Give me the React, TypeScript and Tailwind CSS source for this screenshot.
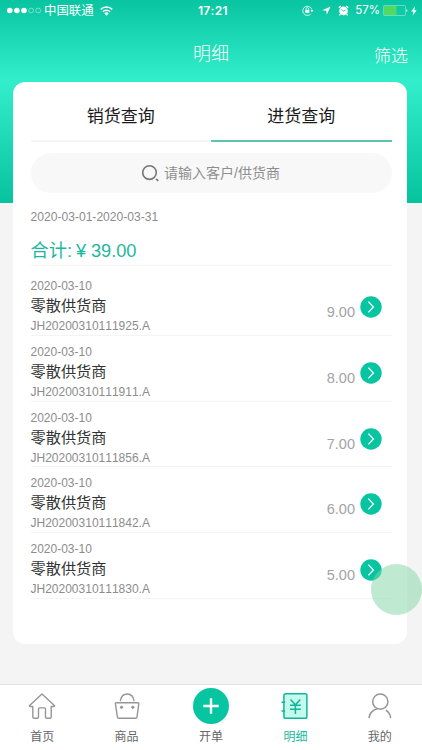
import React from 'react';

const summary = { range: '2020-03-01-2020-03-31', total: '39.00' };

const records = [
  { id: 1, date: '2020-03-10', name: '零散供货商', code: 'JH20200310111925.A', amount: 9 },
  { id: 2, date: '2020-03-10', name: '零散供货商', code: 'JH20200310111911.A', amount: 8 },
  { id: 3, date: '2020-03-10', name: '零散供货商', code: 'JH20200310111856.A', amount: 7 },
  { id: 4, date: '2020-03-10', name: '零散供货商', code: 'JH20200310111842.A', amount: 6 },
  { id: 5, date: '2020-03-10', name: '零散供货商', code: 'JH20200310111830.A', amount: 5 },
];

const StatusBar = () => (
  <div className="flex h-[21px] items-center pl-[7px] pr-[5px] text-white">
    <div className="flex w-[191px] items-center">
      <svg width="35" height="7" viewBox="0 0 35 7" fill="white">
        <circle cx="2.8" cy="3.5" r="2.8" />
        <circle cx="9.9" cy="3.5" r="2.8" />
        <circle cx="17" cy="3.5" r="2.8" />
        <circle cx="24.1" cy="3.5" r="2.4" fill="none" stroke="white" strokeOpacity="0.7" strokeWidth="0.6" />
        <circle cx="31.2" cy="3.5" r="2.4" fill="none" stroke="white" strokeOpacity="0.7" strokeWidth="0.6" />
      </svg>
      <span className="ml-[2px] pt-[2px] text-[12.4px] leading-none">中国联通</span>
      <svg className="ml-[6px]" width="13" height="10" viewBox="0 0 13 10" fill="none" stroke="white" strokeWidth="1.5">
        <path d="M0.7 3.4a8.3 8.3 0 0 1 11.6 0" />
        <path d="M2.8 5.8a5.3 5.3 0 0 1 7.4 0" />
        <path d="M4.3 7.4a3.2 3.2 0 0 1 4.4 0L6.5 9.7z" fill="white" stroke="none" />
      </svg>
    </div>
    <span className="pt-px font-[Inter,sans-serif] text-[12px] font-semibold leading-none tracking-[0.3px]">17:21</span>
    <div className="ml-auto flex items-center">
      <svg width="12" height="11" viewBox="0 0 12 11" fill="none" stroke="white" strokeWidth="0.8">
        <path d="M8.6 9.1A4.6 4.6 0 1 1 9.8 4.5" />
        <path d="M8.4 5h3L9.9 7.2z" fill="white" stroke="none" />
        <rect x="3.3" y="4.9" width="4" height="3" fill="white" stroke="none" />
        <path d="M4 5V3.9a1.3 1.3 0 0 1 2.6 0V5" />
      </svg>
      <svg className="ml-[8px]" width="9" height="9" viewBox="0 0 9 9" fill="white">
        <path d="M8.6 0.4L0.3 4.3l4 0.4 0.4 4z" />
      </svg>
      <svg className="ml-[7px]" width="11" height="11" viewBox="0 0 11 11">
        <circle cx="5.5" cy="5.9" r="4.3" fill="white" />
        <path d="M0.8 2.8L2.8 1M10.2 2.8L8.2 1M2.4 9.2l-1 1.2M8.6 9.2l1 1.2" stroke="white" strokeWidth="1.3" />
        <path d="M3.5 4.4l2 1.7 2-1.1" fill="none" stroke="#12cda9" strokeWidth="0.9" />
      </svg>
      <span className="ml-[6px] pt-px font-[Inter,sans-serif] text-[11.5px] leading-none">57%</span>
      <svg className="ml-[3px]" width="25" height="11" viewBox="0 0 25 11">
        <rect x="0.4" y="0.5" width="22" height="10" rx="1" fill="none" stroke="white" strokeOpacity="0.6" strokeWidth="0.6" />
        <rect x="1" y="1" width="12.5" height="9" fill="#52d962" />
        <path d="M23.4 4v3c1.2-0.4 1.2-2.6 0-3z" fill="white" />
      </svg>
      <svg className="ml-[3px]" width="6" height="10" viewBox="0 0 6 10" fill="white">
        <path d="M4.1 0.2L0.2 5.5h2.2L1.6 9.8l4-5.6H3.3z" />
      </svg>
    </div>
  </div>
);

const ArrowBadge = () => (
  <svg width="22" height="22" viewBox="0 0 22 22">
    <circle cx="11" cy="11" r="10.7" fill="#08c5a1" />
    <path d="M8.4 5.6L13.4 11l-5 5.4" fill="none" stroke="white" strokeWidth="1.3" />
  </svg>
);

const HomeIcon = () => (
  <svg width="28" height="28" viewBox="0 0 28 28" fill="none" stroke="#969696" strokeWidth="1.4" strokeLinejoin="round">
    <path d="M14 1.9L1.6 13.5c-.4.5-.2 1 .4 1h2.8v10.6c0 .7.4 1.1 1.1 1.1h3.6c.7 0 1-.4 1-1.1v-8c0-.8.4-1.2 1.1-1.2h4.8c.7 0 1.1.4 1.1 1.2v8c0 .7.3 1.1 1 1.1h3.6c.7 0 1.1-.4 1.1-1.1V14.5H26c.6 0 .8-.5.4-1z" />
  </svg>
);

const BagIcon = () => (
  <svg width="28" height="28" viewBox="0 0 28 28" fill="none" stroke="#969696" strokeWidth="1.4" strokeLinejoin="round" strokeLinecap="round">
    <path d="M3.1 10.8h21.8c.7 0 1 .4.9 1L24 25c-.1.8-.6 1.3-1.3 1.3H5.8c-.8 0-1.3-.5-1.4-1.3L2.4 11.8c-.1-.6.1-1 .7-1z" />
    <path d="M7.4 8.6c.7-4.1 3.3-6.6 6.8-6.6s6.1 2.5 6.8 6.6" />
    <circle cx="8.5" cy="15.3" r="1.2" fill="#969696" strokeWidth="0.8" />
    <circle cx="19.8" cy="15.3" r="1.2" fill="#969696" strokeWidth="0.8" />
  </svg>
);

const LedgerIcon = () => (
  <svg width="28" height="28" viewBox="0 0 28 28" fill="none" stroke="#12b697" strokeWidth="1.5">
    <rect x="2.9" y="1.8" width="23" height="24.5" rx="1.8" fill="#c4fbee" />
    <path d="M0.5 10.3h3.6M0.5 18.9h3.6" />
    <path d="M9.5 7.6l4.9 5.2 4.9-5.2M14.4 12.8v9.2M9 13.3h10.8M9 17.3h10.8" />
  </svg>
);

const UserIcon = () => (
  <svg width="28" height="28" viewBox="0 0 28 28" fill="none" stroke="#969696" strokeWidth="1.5">
    <circle cx="14.3" cy="9.7" r="7.6" />
    <path d="M11.2 16.8C6.6 18.2 3.5 21.6 3 26.2" />
    <path d="M19.8 18.2c2.9 1.8 4.5 4.3 4.9 8" />
  </svg>
);

const AddIcon = () => (
  <svg width="36" height="36" viewBox="0 0 36 36">
    <circle cx="18" cy="18" r="18" fill="#08c5a1" />
    <path d="M18 10.3v15.4M10.3 18h15.4" stroke="white" strokeWidth="2.4" />
  </svg>
);

const tabs = [
  { label: '首页', icon: <HomeIcon /> },
  { label: '商品', icon: <BagIcon /> },
  { label: '开单', icon: <AddIcon /> },
  { label: '明细', icon: <LedgerIcon />, active: true },
  { label: '我的', icon: <UserIcon /> },
];

const App = () => {
  return (
    <div className="relative flex h-[750px] w-[422px] flex-col overflow-hidden bg-[#f4f4f4] font-['Liberation_Sans','Noto_Sans_CJK_SC',sans-serif] [font-kerning:none]">
      <header className="h-[203px] shrink-0 bg-[linear-gradient(to_bottom,#09c4a0_0%,#32edca_38%,#32edca_41%,#06c39e_100%)]">
        <StatusBar />
        <div className="grid h-[61px] grid-cols-3 pt-[20px] text-white">
          <h1 className="col-start-2 pt-px text-center text-[18px] font-light leading-6">明细</h1>
          <button className="h-7 justify-self-end pr-[14px] pt-[4px] text-[17px] font-light leading-6">筛选</button>
        </div>
      </header>

      <main className="z-10 -mt-[121px] ml-[12.5px] h-[562px] w-[394.5px] shrink-0 rounded-[12px] bg-white pl-[18px] pr-[15.5px]">
        <div className="grid h-[60px] grid-cols-2 text-center text-[17px] text-[#1a1a1a]">
          <button className="border-b-2 border-[#f5f5f5] pt-[12px]">销货查询</button>
          <button className="border-b-2 border-[#5cc5b0] pt-[12px]">进货查询</button>
        </div>

        <div className="mt-[11px] flex h-[40px] items-center justify-center rounded-full bg-[#f8f8f8] text-[14px] text-[#8e8e8e]">
          <svg className="mr-[4px]" width="18" height="18" viewBox="0 0 18 18" fill="none" stroke="#777">
            <circle cx="7.5" cy="8.6" r="6.8" strokeWidth="1.6" />
            <path d="M14.2 14.9l2 2" strokeWidth="1.8" />
          </svg>
          请输入客户/供货商
        </div>

        <p className="mt-[15px] text-[12.1px] leading-[18px] text-[#8c8c8c]">{summary.range}</p>
        <div className="flex h-[40px] items-center border-b border-[#f4f4f4] pt-[12px] text-[18.2px] text-[#1cb89b]">
          <span>合计:</span>
          <span className="ml-[4px] w-[10px]">¥</span>
          <span className="ml-[5px]">{summary.total}</span>
        </div>

        <div className="pt-[4px]">
          {records.map(record => (
            <div key={record.id} className="flex h-[65.75px] justify-between border-b border-[#f4f4f4] pt-[7px]">
              <div className="text-[12px] text-[#8c8c8c]">
                <p className="leading-[18px]">{record.date}</p>
                <p className="text-[15.2px] leading-[22px] text-[#333]">{record.name}</p>
                <p className="leading-[18px]">{record.code}</p>
              </div>
              <div className="flex pr-[9.5px] pt-[19px]">
                <span className="pr-[5px] pt-[5px] text-[14.5px] leading-[22px] text-[#a3a3a3]">{record.amount.toFixed(2)}</span>
                <ArrowBadge />
              </div>
            </div>
          ))}
        </div>
      </main>

      <nav className="mt-auto grid h-[66px] shrink-0 grid-cols-5 border-t border-[#e2e2e2] bg-white text-[12px]">
        {tabs.map(tab => (
          <button key={tab.label} className="flex flex-col items-center">
            <span className="flex h-[42px] items-center">{tab.icon}</span>
            <span className={tab.active ? 'pt-px leading-[18px] text-[#1cb89b]' : 'pt-px leading-[18px] text-[#666]'}>{tab.label}</span>
          </button>
        ))}
      </nav>

      {/* floating touch button */}
      <div className="absolute left-[371px] top-[564px] z-20 size-[51px] rounded-full bg-[#7fd3a3]/50" />
    </div>
  );
};

export default App;
